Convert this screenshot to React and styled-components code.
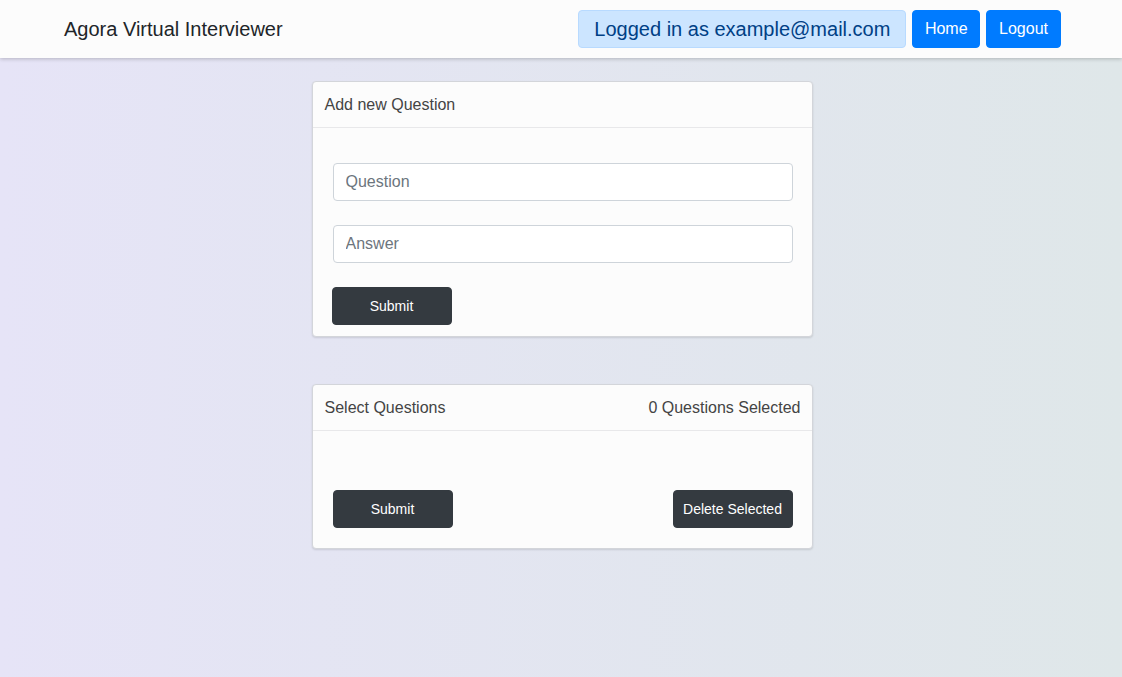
import React, { useState } from 'react';
import styled, { createGlobalStyle } from 'styled-components';

const GlobalStyle = createGlobalStyle`
  html, body {
    margin: 0;
    padding: 0;
  }

  body {
    font-family: "Liberation Sans", Arial, sans-serif;
    background: linear-gradient(to right, #e6e4f7, #dfe7e9);
    min-height: 100vh;
  }

  * {
    box-sizing: border-box;
  }
`;

const Page = styled.div`
  min-height: 677px;
  display: flex;
  flex-direction: column;
`;

const Navbar = styled.nav`
  height: 58px;
  background: #fcfcfc;
  box-shadow: 0 1px 4px rgba(0, 0, 0, 0.22);
  display: flex;
  align-items: center;
  justify-content: space-between;
  padding: 0 61px 0 64px;
`;

const Brand = styled.div`
  font-size: 20px;
  color: #212529;
`;

const NavRight = styled.div`
  display: flex;
  align-items: center;
  gap: 6px;
`;

const UserBadge = styled.div`
  height: 38px;
  display: flex;
  align-items: center;
  padding: 0 15px;
  font-size: 20px;
  color: #004085;
  background: #cce5ff;
  border: 1px solid #b8daff;
  border-radius: 4px;
`;

const NavButton = styled.button`
  height: 38px;
  padding: 0 ${({ $pad }) => $pad || 12}px;
  font-family: inherit;
  font-size: 16px;
  color: #fff;
  background: #007bff;
  border: 1px solid #007bff;
  border-radius: 4px;
  cursor: pointer;
`;

const Content = styled.main`
  display: flex;
  flex-direction: column;
  align-items: center;
  gap: 47px;
  padding: 23px 0 0 2px;
`;

const Card = styled.section`
  width: 501px;
  background: #fcfcfc;
  border: 1px solid #d3d5da;
  border-radius: 4px;
  box-shadow: 0 1px 2px rgba(0, 0, 0, 0.12);
`;

const CardHeader = styled.header`
  height: 46px;
  display: flex;
  align-items: center;
  justify-content: space-between;
  padding: 0 11px 0 12px;
  font-size: 16px;
  color: #444;
  border-bottom: 1px solid #e8e8ea;
`;

const CardBody = styled.div`
  display: flex;
  flex-direction: column;
  gap: 24px;
  padding: ${({ $top }) => $top}px 19px ${({ $bottom }) => $bottom}px 20px;
`;

const Input = styled.input`
  width: 100%;
  height: 38px;
  padding: 6px 12px;
  font-family: inherit;
  font-size: 16px;
  color: #495057;
  background: #fff;
  border: 1px solid #ced4da;
  border-radius: 4px;
  outline: none;

  &::placeholder {
    color: #6c757d;
  }
`;

const Actions = styled.div`
  display: flex;
  justify-content: space-between;
`;

const DarkButton = styled.button`
  width: 120px;
  height: 38px;
  margin-left: ${({ $shift }) => $shift || 0}px;
  font-family: inherit;
  font-size: 14px;
  color: #fff;
  background: #343a40;
  border: 1px solid #343a40;
  border-radius: 4px;
  cursor: pointer;
`;

const App = () => {
  const [question, setQuestion] = useState('');
  const [answer, setAnswer] = useState('');
  const [selected] = useState([]);

  return (
    <Page>
      <GlobalStyle />
      <Navbar>
        <Brand>Agora Virtual Interviewer</Brand>
        <NavRight>
          <UserBadge>Logged in as example@mail.com</UserBadge>
          <NavButton $pad={11.5}>Home</NavButton>
          <NavButton>Logout</NavButton>
        </NavRight>
      </Navbar>

      <Content>
        <Card>
          <CardHeader>Add new Question</CardHeader>
          <CardBody $top={35} $bottom={11}>
            <Input
              placeholder="Question"
              value={question}
              onChange={(e) => setQuestion(e.target.value)}
            />
            <Input
              placeholder="Answer"
              value={answer}
              onChange={(e) => setAnswer(e.target.value)}
            />
            <Actions>
              <DarkButton $shift={-1}>Submit</DarkButton>
            </Actions>
          </CardBody>
        </Card>

        <Card>
          <CardHeader>
            <span>Select Questions</span>
            <span>{selected.length} Questions Selected</span>
          </CardHeader>
          <CardBody $top={59} $bottom={20}>
            <Actions>
              <DarkButton>Submit</DarkButton>
              <DarkButton>Delete Selected</DarkButton>
            </Actions>
          </CardBody>
        </Card>
      </Content>
    </Page>
  );
};

export default App;
